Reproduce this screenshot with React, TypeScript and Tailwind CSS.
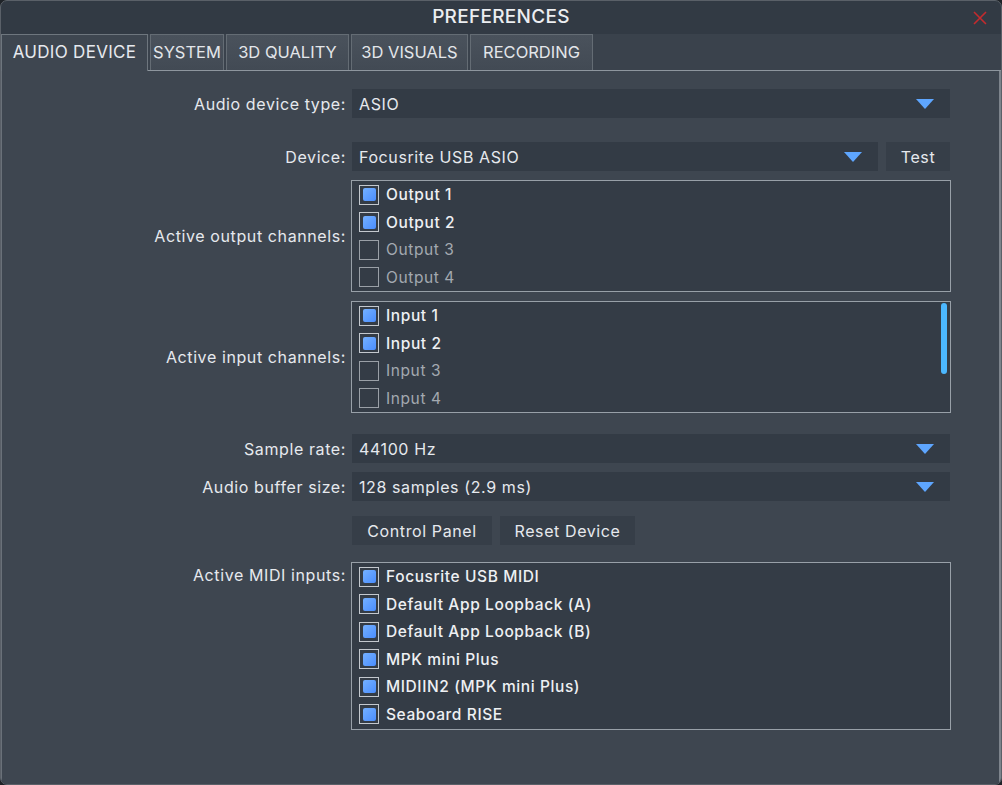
import React from "react";

const font = { fontFamily: "Inter, 'Noto Sans', sans-serif" };

function Arrow() {
  return (
    <svg width="18" height="10" viewBox="0 0 18 10" className="shrink-0">
      <polygon points="0,0 18,0 9,10" fill="#5ea6ff" />
    </svg>
  );
}

function Combo({ value, className = "" }: { value: string; className?: string }) {
  return (
    <div
      className={`h-[29px] ml-[1px] bg-[#333b45] flex items-center justify-between pl-[7px] pr-[16px] text-[16px] tracking-[0.6px] text-[#e6e9ee] ${className}`}
    >
      <span>{value}</span>
      <Arrow />
    </div>
  );
}

function Check({ on }: { on: boolean }) {
  return (
    <div
      className={`w-[20px] h-[20px] shrink-0 border-[1.5px] flex items-center justify-center ${
        on ? "border-[#c3c8ce]" : "border-[#9aa0a7]"
      }`}
    >
      {on && <div className="w-[13px] h-[13px] rounded-[2px] bg-gradient-to-br from-[#74b0ff] to-[#4a8dff]" />}
    </div>
  );
}

function ListBox({
  items,
  height,
  scroll = false,
}: {
  items: { label: string; on: boolean }[];
  height: string;
  scroll?: boolean;
}) {
  return (
    <div className={`relative w-[600px] ${height} border border-[#98a0a8] bg-[#343c46]`}>
      {items.map((it) => (
        <div key={it.label} className="h-[27.5px] flex items-center gap-[7px] pl-[7px]">
          <Check on={it.on} />
          <span
            className={`text-[15.5px] tracking-[0.6px] ${
              it.on ? "text-[#eef0f3] font-medium" : "text-[#a3a9b0]"
            }`}
          >
            {it.label}
          </span>
        </div>
      ))}
      {scroll && (
        <div className="absolute right-[3px] top-[1px] w-[6px] h-[71px] rounded-full bg-[#4cb8ff]" />
      )}
    </div>
  );
}

function Label({ children, top = false }: { children: React.ReactNode; top?: boolean }) {
  return (
    <div
      className={`w-[349px] shrink-0 pr-[5px] text-right text-[16px] tracking-[0.6px] text-[#e6e9ee] ${
        top ? "self-start pt-[1px]" : ""
      }`}
    >
      {children}
    </div>
  );
}

function Btn({ children, className = "" }: { children: React.ReactNode; className?: string }) {
  return (
    <div
      className={`h-[29px] bg-[#363e48] flex items-center justify-center text-[16px] tracking-[0.6px] text-[#e6e9ee] ${className}`}
    >
      {children}
    </div>
  );
}

const tabs = [
  { label: "SYSTEM", w: "w-[74px]" },
  { label: "3D QUALITY", w: "w-[123px]" },
  { label: "3D VISUALS", w: "w-[117px]" },
  { label: "RECORDING", w: "w-[123px]" },
];

export default function App() {
  return (
    <div className="w-[1002px] h-[785px] bg-[#1f2328]" style={font}>
      <div className="w-full h-full rounded-[7px] overflow-hidden flex flex-col bg-[#323a44] border border-[#5a6068]">
        {/* Title bar */}
        <div className="h-[33px] shrink-0 relative flex items-center justify-center">
          <span className="text-[19px] font-medium text-[#eceef1] tracking-[0.3px]">PREFERENCES</span>
          <svg
            width="14"
            height="14"
            viewBox="0 0 14 14"
            className="absolute right-[14px] top-[10px]"
          >
            <path d="M1 1L13 13M13 1L1 13" stroke="#c42a2d" strokeWidth="1.6" />
          </svg>
        </div>

        {/* Tabs */}
        <div className="h-[37px] shrink-0 flex items-end bg-[#3a424c]">
          <div className="h-[37px] w-[147px] flex items-center justify-center bg-[#3e4650] border-t border-l border-r border-[#6e767e] text-[17px] tracking-[0.3px] text-[#e6e9ee]">
            AUDIO DEVICE
          </div>
          <div className="flex-1 flex items-end h-[37px] border-b border-[#8e969e]">
            {tabs.map((t) => (
              <div
                key={t.label}
                className={`h-[36px] ml-[2px] ${t.w} flex items-center justify-center bg-gradient-to-b from-[#4a525c] to-[#424a54] border border-b-0 border-[#646c74] text-[16.5px] tracking-[0px] text-[#e3e6ea]`}
              >
                {t.label}
              </div>
            ))}
          </div>
        </div>

        {/* Content */}
        <div className="flex-1 bg-[#3e4650] border-l border-[#6a7179] border-r-2 border-r-[#7d848c] flex flex-col pt-[18px]">
          <div className="flex items-center">
            <Label>Audio device type:</Label>
            <Combo value="ASIO" className="w-[598px]" />
          </div>

          <div className="flex items-center mt-[24px]">
            <Label>Device:</Label>
            <Combo value="Focusrite USB ASIO" className="w-[526px]" />
            <Btn className="w-[64px] ml-[8px]">Test</Btn>
          </div>

          <div className="flex items-center mt-[9px]">
            <Label>Active output channels:</Label>
            <ListBox
              height="h-[112px]"
              items={[
                { label: "Output 1", on: true },
                { label: "Output 2", on: true },
                { label: "Output 3", on: false },
                { label: "Output 4", on: false },
              ]}
            />
          </div>

          <div className="flex items-center mt-[9px]">
            <Label>Active input channels:</Label>
            <ListBox
              height="h-[112px]"
              scroll
              items={[
                { label: "Input 1", on: true },
                { label: "Input 2", on: true },
                { label: "Input 3", on: false },
                { label: "Input 4", on: false },
              ]}
            />
          </div>

          <div className="flex items-center mt-[21px]">
            <Label>Sample rate:</Label>
            <Combo value="44100 Hz" className="w-[598px]" />
          </div>

          <div className="flex items-center mt-[9px]">
            <Label>Audio buffer size:</Label>
            <Combo value="128 samples (2.9 ms)" className="w-[598px]" />
          </div>

          <div className="flex items-center mt-[15px]">
            <div className="w-[350px] shrink-0" />
            <Btn className="w-[140px]">Control Panel</Btn>
            <Btn className="w-[135px] ml-[8px]">Reset Device</Btn>
          </div>

          <div className="flex mt-[17px]">
            <Label top>Active MIDI inputs:</Label>
            <ListBox
              height="h-[168px]"
              items={[
                { label: "Focusrite USB MIDI", on: true },
                { label: "Default App Loopback (A)", on: true },
                { label: "Default App Loopback (B)", on: true },
                { label: "MPK mini Plus", on: true },
                { label: "MIDIIN2 (MPK mini Plus)", on: true },
                { label: "Seaboard RISE", on: true },
              ]}
            />
          </div>
        </div>
      </div>
    </div>
  );
}
